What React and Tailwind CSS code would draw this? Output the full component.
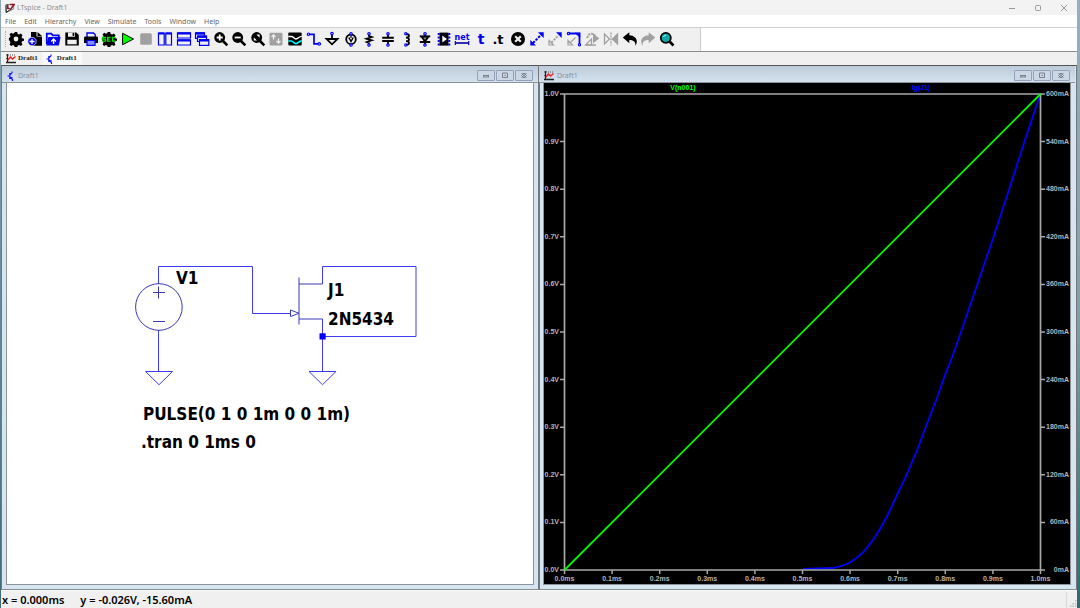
const BLUE = '#0000f0';

function Svg({ children }) {
  return (
    <svg viewBox="0 0 16 16" className="w-4 h-4" fill="none" stroke="#000" strokeWidth={1.8} aria-hidden="true">
      {children}
    </svg>
  );
}

function Terminals() {
  return (
    <g fill="#fff" stroke={BLUE} strokeWidth={1.2}>
      <circle cx="8" cy="2.8" r="1.2" />
      <circle cx="8" cy="14" r="1.2" />
    </g>
  );
}

function Lens({ children }) {
  return (
    <>
      <circle cx="6.7" cy="6.5" r="5.4" fill="#000" stroke="none" />
      <path d="M10 10 14.3 14.3" strokeWidth={2.6} />
      {children}
    </>
  );
}

const GEAR = 'M6.8 1h2.4l.5 1.9 1.4.6 1.7-1 1.7 1.7-1 1.7.6 1.4 1.9.5v2l-1.9.5-.6 1.4 1 1.7-1.7 1.7-1.7-1-1.4.6-.5 1.8H6.8l-.5-1.8-1.4-.6-1.7 1-1.7-1.7 1-1.7-.6-1.4L0.9 9V7l1.2-.7.4-1.2-1-1.7 1.7-1.7 1.7 1 1.4-.6z';

const tools = [
  {
    name: 'Settings',
    icon: (
      <>
        <path d={GEAR} fill="#000" stroke="none" />
        <circle cx="8" cy="8" r="2.4" fill="#f0f0f0" stroke="none" />
      </>
    ),
  },
  {
    name: 'New Schematic',
    icon: (
      <>
        <path d="M4 1h5.5v4.5H15v9.2H4z" fill="#000" stroke="none" />
        <path d="M10.5 1 15 5h-4.500z" fill="#000" stroke="none" />
        <circle cx="5" cy="10.5" r="4.2" fill={BLUE} stroke="#f0f0f0" strokeWidth={0.7} />
        <path d="M2.5 10.5h5M5 8v5" stroke="#fff" strokeWidth={1.3} />
      </>
    ),
  },
  {
    name: 'Open',
    icon: (
      <>
        <path d="M1.8 13V2.6h4.5l1.5 1.7h6V7" stroke={BLUE} />
        <path d="M3.4 6H15.6L13.8 14.400H1.2z" fill={BLUE} stroke="none" />
        <path d="M8.6 13V8M6.3 10.4 8.6 8l2.3 2.4" stroke="#fff" strokeWidth={1.4} />
      </>
    ),
  },
  {
    name: 'Save',
    icon: (
      <>
        <path d="M1.3 1.5h11l2.5 2.5v10.5H1.3z" fill="#000" stroke="none" />
        <path d="M4 1.5h7v4.2H4zM3.3 8.7h9.4v4.6H3.3z" fill="#f0f0f0" stroke="none" />
        <path d="M8.6 2h1.7v3H8.6z" fill="#000" stroke="none" />
      </>
    ),
  },
  {
    name: 'Print',
    icon: (
      <>
        <path d="M4 6V2h6.500l1.700 1.700V6" stroke={BLUE} strokeWidth={1.4} />
        <path d="M1 6.700Q1 5.500 2.300 5.500h11.400q1.300 0 1.300 1.200V12H1z" fill="#000" stroke="none" />
        <path d="M4 9.500h8v4.800H4z" fill="#7f8fff" stroke={BLUE} strokeWidth={1.2} />
      </>
    ),
  },
  {
    name: 'Control Panel',
    icon: (
      <>
        <path d={GEAR} fill="#000" stroke="none" />
        <path d="M5 6.300H1.800v1.900h2.700v1.900H1.200M9.500 6.300H6.600v3.800h2.900M14.800 6.300h-3.200v3.800h3.200M6.600 8.200h2" stroke="#00e800" strokeWidth={1.3} />
      </>
    ),
  },
  { name: 'Run', icon: <path d="M2.6 2.3 13.6 8 2.6 13.7z" fill="#0f0" strokeWidth={1} /> },
  { name: 'Halt', icon: <rect x="2.2" y="2.2" width="11.6" height="11.6" rx="1.5" fill="#a0a0a0" stroke="none" /> },
  {
    name: 'Tile Vertically',
    icon: (
      <g stroke={BLUE} strokeWidth={1.2}>
        <path d="M1.5 2h5.7v12H1.5zM8.8 2h5.7v12H8.8z" fill="#f0f0f0" />
        <path d="M1.5 2.5h5.7M8.8 2.5h5.7" strokeWidth={2.2} />
      </g>
    ),
  },
  {
    name: 'Tile Horizontally',
    icon: (
      <g stroke={BLUE} strokeWidth={1.2}>
        <path d="M1.5 1.8h13v5.2h-13zM1.5 8.8h13V14h-13z" fill="#f0f0f0" />
        <path d="M1.5 2.5h13M1.5 9.5h13" strokeWidth={2.2} />
      </g>
    ),
  },
  {
    name: 'Cascade',
    icon: (
      <g stroke={BLUE} strokeWidth={1.2}>
        <path d="M1.5 1.8h9v5.5h-9z" fill="#f0f0f0" />
        <path d="M1.5 2.5h9" strokeWidth={2.4} />
        <path d="M3.5 5h9v5.5h-9z" fill="#f0f0f0" />
        <path d="M3.5 5.7h9" strokeWidth={2.4} />
        <path d="M5.5 8.6h9.300v5.700H5.5z" fill="#f0f0f0" />
        <path d="M5.5 9.3h9.300" strokeWidth={2.4} />
      </g>
    ),
  },
  { name: 'Zoom In', icon: <Lens><path d="M3.7 6.5h6M6.7 3.5v6" stroke="#fff" /></Lens> },
  { name: 'Zoom Out', icon: <Lens><path d="M3.7 6.5h6" stroke="#fff" /></Lens> },
  {
    name: 'Zoom to Fit',
    icon: (
      <Lens>
        <path d="M6.4 3.6h3.200v3.200zM3.800 6.400v3.200H7z" fill="#fff" stroke="none" />
      </Lens>
    ),
  },
  {
    name: 'Autorange',
    icon: (
      <>
        <rect x="1.5" y="1.8" width="13" height="12.8" rx="1" fill="#a0a0a0" stroke="none" />
        <path d="M5.500 8.500V4M3.500 6l2-2.200 2 2.200M10.500 7.500V12M8.500 10l2 2.200 2-2.200" stroke="#f0f0f0" strokeWidth={1.2} />
      </>
    ),
  },
  {
    name: 'Waveforms',
    icon: (
      <>
        <rect x="1.3" y="1.5" width="13.4" height="13" rx="1" fill="#000" stroke="none" />
        <path d="M1.3 5.500h3.200c2 0 2.500 2.500 4.500 2.500 2.500 0 2.500-2.700 5.700-2.700" stroke="#fff" strokeWidth={1.3} />
        <path d="M1.300 10h3c2 0 2.500 2.600 4.700 2.600 2.200 0 2.700-2.600 5.700-2.800" stroke="#0ff" strokeWidth={1.7} />
      </>
    ),
  },
  {
    name: 'Wire',
    icon: (
      <g stroke={BLUE}>
        <path d="M3 3.300h5v9.500h4.500" strokeWidth={1.7} />
        <circle cx="2.500" cy="3.200" r="1.200" fill="#fff" strokeWidth={1.2} />
        <circle cx="13.300" cy="12.900" r="1.200" fill="#fff" strokeWidth={1.2} />
      </g>
    ),
  },
  {
    name: 'Ground',
    icon: (
      <>
        <path d="M8 3.500V8M2.500 8h11L8 13.300z" />
        <circle cx="8" cy="2.600" r="1.200" fill="#fff" stroke={BLUE} strokeWidth={1.2} />
      </>
    ),
  },
  {
    name: 'Voltage Source',
    icon: (
      <>
        <circle cx="8" cy="8.300" r="4.800" />
        <path d="M5.800 6.500 8 10.500l2.200-4" strokeWidth={1.5} />
        <path d="M8 4v3" strokeWidth={1.2} />
        <Terminals />
      </>
    ),
  },
  {
    name: 'Resistor',
    icon: (
      <>
        <path d="M8 3v2L10.800 6 5.500 7.800l5.200 1.500L5.800 11 8 12v1" />
        <Terminals />
      </>
    ),
  },
  {
    name: 'Capacitor',
    icon: (
      <>
        <path d="M8 3v3.500M8 10V13" />
        <path d="M2.200 6.700h11.600M2.200 10h11.600" strokeWidth={1.9} />
        <Terminals />
      </>
    ),
  },
  {
    name: 'Inductor',
    icon: (
      <>
        <path d="M7 3c4 0 4 3.600 0 3.600 4 0 4 3.600 0 3.600 4 0 4 3.600 0 3.600" />
        <g fill="#fff" stroke={BLUE} strokeWidth={1.2}>
          <circle cx="6.800" cy="2.800" r="1.100" />
          <circle cx="6.800" cy="14" r="1.100" />
        </g>
      </>
    ),
  },
  {
    name: 'Diode',
    icon: (
      <>
        <path d="M8 3v10M2.800 5.300h10.400M2.800 11h10.400" />
        <path d="M4.500 5.600h7L8 10.500z" fill="#888" />
        <Terminals />
      </>
    ),
  },
  {
    name: 'Component',
    icon: (
      <>
        <path d="M3.500 1.600h9v13h-9z" fill="#000" stroke="none" />
        <path d="M6.300 4.500 11 8l-4.700 3.500z" fill="#fff" stroke="none" />
        <path d="M2.700 2v12.500M13.300 2v12.500" stroke={BLUE} strokeWidth={2} strokeDasharray="2 1.500" />
      </>
    ),
  },
  {
    name: 'Label Net',
    icon: (
      <>
        <text x="8" y="8.500" textAnchor="middle" fontSize="8" fontWeight="700" fill={BLUE} stroke="none" fontFamily="DejaVu Sans, sans-serif">net</text>
        <path d="M1.500 12h13" stroke="#0000a0" strokeWidth={1.600} />
        <path d="M1.300 10v4M14.700 10v4" stroke="#0000a0" strokeWidth={1.200} />
      </>
    ),
  },
  { name: 'Text', icon: <text x="8" y="13" textAnchor="middle" fontSize="14" fontWeight="700" fill={BLUE} stroke="none" fontFamily="DejaVu Sans, sans-serif">t</text> },
  { name: 'SPICE Directive', icon: <text x="7" y="13" textAnchor="middle" fontSize="13" fontWeight="700" fill="#000" stroke="none" fontFamily="DejaVu Sans, sans-serif">.t</text> },
  {
    name: 'Delete',
    icon: (
      <>
        <circle cx="8" cy="8" r="7" fill="#000" stroke="none" />
        <path d="M5.200 5.200l5.600 5.600M10.800 5.200l-5.600 5.600" stroke="#f0f0f0" strokeWidth={2.200} />
      </>
    ),
  },
  {
    name: 'Move',
    icon: (
      <g stroke="none" fill={BLUE}>
        <path d="M9 1.300h5.700V7zM1.300 9v5.500H7z" />
        <path d="M4 12 12.500 3.500" stroke={BLUE} strokeWidth={2} strokeDasharray="2.500 1.200" />
      </g>
    ),
  },
  {
    name: 'Duplicate',
    icon: (
      <>
        <path d="M9 1.300h5.700V7z" fill={BLUE} stroke="none" />
        <path d="M2 9.500v4.500h4.500z" stroke="#a0a0a0" strokeWidth={1.200} />
        <path d="M4.500 11.500 12 4" stroke="#a0a0a0" strokeDasharray="2 1.300" />
      </>
    ),
  },
  {
    name: 'Drag',
    icon: (
      <>
        <path d="M3 2.500h10.500v11" stroke={BLUE} />
        <path d="M8.500 1.800h5.700v5.200z" fill={BLUE} stroke="none" />
        <path d="M2 9.500v4.500h4.500zM4.500 11.500 9.500 6.500" stroke="#a0a0a0" strokeWidth={1.200} />
        <circle cx="2.500" cy="2.500" r="1.100" fill="#fff" stroke={BLUE} strokeWidth={1.200} />
        <circle cx="13.500" cy="13.700" r="1.100" fill="#fff" stroke={BLUE} strokeWidth={1.200} />
      </>
    ),
  },
  {
    name: 'Rotate',
    icon: (
      <g stroke="#a0a0a0">
        <path d="M3.500 7C3.500 2.500 9.500 1 11 5" strokeWidth={2} strokeDasharray="2 1" />
        <path d="M9 2.500 15.300 7.500 9 12.300z" fill="#a0a0a0" stroke="none" />
        <path d="M1.500 14 7.500 8v6z" strokeWidth={1.200} />
        <path d="M2 14h10" strokeWidth={1.500} />
      </g>
    ),
  },
  {
    name: 'Mirror',
    icon: (
      <g stroke="#a0a0a0" strokeWidth={1.300}>
        <path d="M1.500 3v10l5-5z" />
        <path d="M14.500 3v10l-5-5z" fill="#a0a0a0" />
        <path d="M8 1.500v13" strokeDasharray="2 1" />
      </g>
    ),
  },
  {
    name: 'Undo',
    icon: <path d="M.8 6.600 7.300 1.200v3c6.500.3 9.500 5.300 6 10.800.6-4-1.500-6-6-6v3.200z" fill="#000" stroke="none" />,
  },
  {
    name: 'Redo',
    icon: <path d="M15.200 6.600 8.700 1.200v3c-6.500.3-9.500 5.300-6 10.800-.6-4 1.500-6 6-6v3.200z" fill="#a0a0a0" stroke="none" />,
  },
  {
    name: 'Search',
    icon: (
      <>
        <path d="M10 10l4.500 4.500" strokeWidth={2.600} />
        <circle cx="6.800" cy="6.800" r="5" fill="#10a8a8" />
        <path d="M4.500 6a3 3 0 0 1 2.500-2" stroke="#b0ffff" strokeWidth={1} />
      </>
    ),
  },
];

function WaveIcon() {
  return (
    <svg viewBox="0 0 10 10" className="w-[10px] h-[10px] shrink-0" fill="none" aria-hidden="true">
      <path d="M1.5 0v9M0 8.5h10" stroke="#222" strokeWidth={1.3} />
      <path d="M0 1h10M0 4.5h2" stroke="#555" strokeWidth={1} strokeDasharray="1 1" />
      <path d="M2 6 4.5 3l2 2L9.5 2.5" stroke="#f02020" strokeWidth={1.5} />
    </svg>
  );
}

function SchematicIcon() {
  return (
    <svg viewBox="0 0 8 10" className="w-2 h-[10px] shrink-0" fill="none" stroke="#1414ff" strokeWidth={1.2} aria-hidden="true">
      <path d="M.5 5h2M2.8 2v6M2.8 4 5 1.800V.5M2.8 6 5.500 8.500V10" />
      <path d="M3.500 6l2 .5-1.200 1.500z" fill="#1414ff" strokeWidth={0.5} />
    </svg>
  );
}

const glyphs = {
  Minimize: <rect x="2.5" y="4.5" width="5" height="1.5" />,
  Maximize: <path d="M2.500 2h5v4.500h-5zM4.500 4.300h1.500" />,
  Close: <path d="M2.500 2l5 5M7.500 2l-5 5M2.500 4.500 5 2l2.500 2.500L5 7z" />,
};

function ChildWindow({ title, icon, className, children }) {
  return (
    <section className={`flex min-w-0 flex-1 flex-col border border-x-[#777] border-t-[#555] border-b-[#8a8f94] bg-[#d7e4f2] pb-1 ${className}`}>
      <div className="-mx-1 flex h-[17px] items-center gap-[3px] border-b border-[#8d949c] bg-linear-to-b from-[#bccbda] to-[#d5e1ee] px-[5px] pt-[3px]">
        {icon}
        <h2 className="flex-1 font-['Noto_Sans',sans-serif] text-[7px] leading-none text-[#8b9199]">{title}</h2>
        <div className="flex gap-px">
          {Object.keys(glyphs).map((name) => (
            <button key={name} aria-label={name} className="flex h-[11px] w-[18px] items-center justify-center rounded-[1px] border border-[#94a3ba] bg-[#cbd7e5]">
              <svg viewBox="0 0 10 9" className="w-[10px] h-[9px]" fill="none" stroke="#777f8c" strokeWidth={1}>
                {glyphs[name]}
              </svg>
            </button>
          ))}
        </div>
      </div>
      <div className="flex min-h-0 flex-1 border border-t-0 border-[#8d949c]">{children}</div>
    </section>
  );
}

function Schematic() {
  return (
    <svg viewBox="7 83 526 501" className="block h-full w-full bg-white" fill="none" stroke="#3c3cf0" strokeWidth={1} role="img" aria-label="Schematic">
      {/* wires */}
      <path d="M158.5 284V266.5H252.5V313.5H290" />
      <path d="M322.5 284V266.5H416V336.5H322.5" />
      <path d="M158.5 330V371.5M322.5 319V371.5" />
      {/* grounds */}
      <path d="M145.5 371.5h27L159 384.7zM309 371.5h27L322.5 384.7z" />
      {/* V1 */}
      <g stroke="#3838b4">
        <circle cx="158.9" cy="307" r="23.3" />
        <path d="M153 292.5h12M158.5 286.5v12M153 321.5h12" />
      </g>
      {/* J1 */}
      <g stroke="#3838b4">
        <path d="M299 277.5v47M299 284h23.5M299 319h23.5" />
        <path d="M290.5 310v6.5l8.500-3.200z" />
      </g>
      <rect x="319.5" y="333.3" width="6.2" height="6.2" fill="#00f" stroke="none" />
      <g fill="#000" stroke="none" fontFamily="'DejaVu Sans Condensed', 'DejaVu Sans', sans-serif" fontSize="17" fontWeight="700">
        <text x="176" y="284">V1</text>
        <text x="328" y="296">J1</text>
        <text x="328" y="325">2N5434</text>
        <text x="143" y="420">PULSE(0 1 0 1m 0 0 1m)</text>
        <text x="141" y="448">.tran 0 1ms 0</text>
      </g>
    </svg>
  );
}

const current = [
  [803, 569], [833, 568], [843, 565.5], [850, 562.5], [857, 557.5], [863, 552.5], [873, 540], [880, 529], [887, 516.5],
  [897, 495], [907, 474], [918, 448], [928, 421], [937, 398], [945, 375], [951, 360], [957, 343.5], [980, 276.5],
  [992, 241.5], [1005, 202], [1025, 140], [1040, 95],
];

function Plot() {
  const steps = [0, 1, 2, 3, 4, 5, 6, 7, 8, 9, 10];
  return (
    <svg viewBox="544 83 526 501" className="block h-full w-full bg-black" fill="none" role="img" aria-label="Waveforms">
      <polyline points={current.map((p) => p.join(',')).join(' ')} stroke="#00f" strokeWidth={1.8} />
      <path d="M564.5 94H1040.5V570H564.5z" stroke="#a8a8a8" strokeWidth={1.7} />
      <g stroke="#a8a8a8" strokeWidth={1.5}>
        {steps.map((i) => (
          <path key={i} d={`M${564.5 + 47.6 * i} 570v4M560 ${570 - 47.6 * i}h4.5M1040 ${570 - 47.6 * i}h5`} />
        ))}
      </g>
      <path d="M564.5 570 1040.5 94" stroke="#00f800" strokeWidth={1.8} />
      <g fill="#b4b4b4" fontFamily="'Liberation Sans', sans-serif" fontSize="7" fontWeight="700">
        {steps.map((i) => (
          <g key={i}>
            <text x="559" y={572 - 47.6 * i} textAnchor="end">{(i / 10).toFixed(1)}V</text>
            <text x={564.5 + 47.6 * i} y="581" textAnchor="middle">{(i / 10).toFixed(1)}ms</text>
            <text x="1069" y={572 - 47.6 * i} textAnchor="end">{i * 60}mA</text>
          </g>
        ))}
        <text x="683" y="90" textAnchor="middle" fill="#0f0">V(n001)</text>
        <text x="921" y="90" textAnchor="middle" fill="#00f">Ig(J1)</text>
      </g>
    </svg>
  );
}

export default function App() {
  const menus = ['File', 'Edit', 'Hierarchy', 'View', 'Simulate', 'Tools', 'Window', 'Help'];

  return (
    <div className="flex h-screen bg-[#f0f0f0] font-['Noto_Sans',sans-serif]">
      <div className="w-px bg-linear-to-b from-[#8fa9b4] to-[#3c6c74]" />
      <main className="flex min-w-0 flex-1 flex-col">
        {/* Title bar */}
        <header className="flex h-[15px] items-center gap-[2px] bg-[#f3f3f3] pl-1 pr-2">
          <svg viewBox="0 0 10 10" className="w-[10px] h-[10px]" fill="none" aria-hidden="true">
            <path d="M1 1.5h8L8.500 6 1.500 9.500z" fill="#fff" stroke="#555" strokeWidth={0.7} />
            <path d="M2.800 1.500v4h2M5 1.500h4L5.500 6.500" stroke="#8c1420" strokeWidth={1.5} />
            <path d="M1 2v7.500l5-3.500" stroke="#222" strokeWidth={1} />
          </svg>
          <h1 className="flex-1 text-[7px] leading-none text-[#8f8f8f]">LTspice - Draft1</h1>
          <div className="flex gap-4 text-[#999]">
            <button aria-label="Minimize window" className="w-[10px]">
              <svg viewBox="0 0 10 10" stroke="currentColor"><path d="M2 5.5h6" /></svg>
            </button>
            <button aria-label="Maximize window" className="w-[10px]">
              <svg viewBox="0 0 10 10" stroke="currentColor" fill="none"><rect x="2.5" y="2.5" width="5" height="5" rx="1" /></svg>
            </button>
            <button aria-label="Close window" className="w-[10px]">
              <svg viewBox="0 0 10 10" stroke="currentColor"><path d="M2 2l6 6M8 2 2 8" /></svg>
            </button>
          </div>
        </header>

        {/* Menu */}
        <nav className="flex h-[13px] items-center gap-2 border-b border-[#d0d0d0] bg-white pl-1 text-[7px] leading-none text-[#666]">
          {menus.map((m) => (
            <button key={m}>{m}</button>
          ))}
        </nav>

        {/* Toolbar */}
        <div className="flex h-6 border-b border-[#8c8c8c] bg-white">
          <div className="flex w-[700px] items-center border-r border-[#ccc] bg-[#f0f0f0] pb-0.5 pl-1">
            <span className="h-4 w-[2px] border-l border-dotted border-[#aaa]" />
            <div className="grid w-[669px] grid-cols-36">
              {tools.map((t) => (
                <button key={t.name} aria-label={t.name} title={t.name} className="flex justify-center">
                  <Svg>{t.icon}</Svg>
                </button>
              ))}
            </div>
          </div>
        </div>

        {/* Document tabs */}
        <div className="flex h-[13px] font-['Liberation_Serif',serif] text-[7px] font-bold leading-none text-[#222]">
          <button className="flex items-center gap-[2px] px-1 pl-[5px]">
            <WaveIcon />
            Draft1
          </button>
          <button className="flex items-center gap-[3px] bg-[#f9f9f9] pl-1 pr-[5px]">
            <SchematicIcon />
            Draft1
          </button>
        </div>

        {/* Documents */}
        <div className="flex min-h-0 flex-1">
          <ChildWindow title="Draft1" icon={<SchematicIcon />} className="px-1">
            <Schematic />
          </ChildWindow>
          <ChildWindow title="Draft1" icon={<WaveIcon />} className="pl-[3px] pr-[5px]">
            <Plot />
          </ChildWindow>
        </div>

        {/* Status bar */}
        <footer className="flex h-[18px] items-center border-t border-[#fafafa] text-[11px] font-semibold leading-none text-black">
          <span className="pl-px">x = 0.000ms</span>
          <span className="flex-1 pl-4">y = -0.026V, -15.60mA</span>
          <span className="h-4 border-l border-[#d8d8d8]" />
          <svg viewBox="0 0 10 16" className="w-[10px] h-4" fill="#bbb" aria-hidden="true">
            <path d="M8 8h1.500v1.500H8zM5.500 11H7v1.500H5.500zM8 11h1.500v1.500H8zM3 13.500h1.500V15H3zM5.500 13.500H7V15H5.500zM8 13.500h1.500V15H8z" />
          </svg>
        </footer>
      </main>
      <div className="w-[3px] bg-linear-to-b from-[#8fb2be] via-[#7ba3af] to-[#2b6b73]" />
    </div>
  );
}
